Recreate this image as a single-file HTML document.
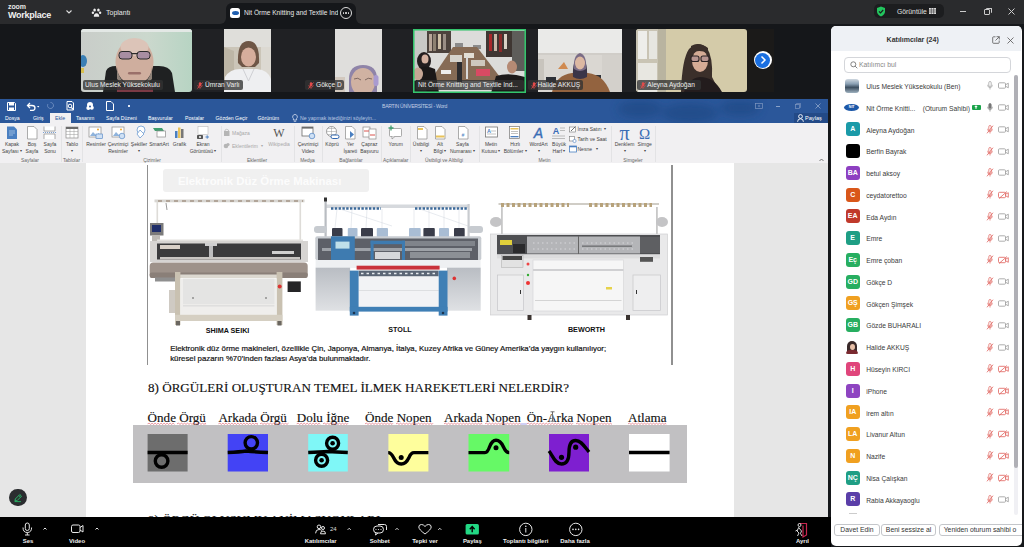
<!DOCTYPE html>
<html><head><meta charset="utf-8">
<style>
*{margin:0;padding:0;box-sizing:border-box}
html,body{width:1024px;height:547px;overflow:hidden;background:#16181b;font-family:"Liberation Sans",sans-serif}
.a{position:absolute}
#top{left:0;top:0;width:1024px;height:24px;background:#2a2b2d}
#strip{left:0;top:24px;width:831px;height:74px;background:#15171a}
.tile{position:absolute;top:29px;height:63px;overflow:hidden;border-radius:2px}
.lbl{position:absolute;height:9.5px;background:rgba(50,50,50,.78);color:#eee;font-size:6.6px;line-height:9.5px;padding:0 2px;border-radius:2px;white-space:nowrap;overflow:hidden}
#word{left:0;top:99px;width:828px;height:418px;background:#e6e6e6;overflow:hidden}
#wtitle{left:0;top:0;width:828px;height:24px;background:#2b579a}
#ribbon{left:0;top:24px;width:828px;height:40px;background:#f1f0f2}
.tab{position:absolute;top:15px;color:#fff;font-size:5.2px;line-height:8px;white-space:nowrap}
.rl{position:absolute;width:60px;text-align:center;font-size:5px;line-height:7px;color:#444;white-space:nowrap}
.rl i,.rs i{font-style:normal;font-size:3.5px;vertical-align:1px}
.rg{position:absolute;width:80px;text-align:center;font-size:4.9px;line-height:6px;color:#666;white-space:nowrap;margin-top:1.5px}
.rs{position:absolute;font-size:5px;line-height:7px;color:#444;white-space:nowrap}
.cap{position:absolute;width:60px;text-align:center;font-weight:bold;font-size:7.2px;line-height:8px;color:#111;white-space:nowrap}
.ser{font-family:"Liberation Serif",serif;font-size:13.1px;line-height:15px;color:#111;white-space:nowrap;-webkit-text-stroke:0.15px #111}
.sq{}
.av{position:absolute;left:14.5px;width:14px;height:14px;border-radius:3px;color:#fff;font-size:7px;font-weight:bold;line-height:14px;text-align:center}
.pn{position:absolute;left:35px;font-size:6.7px;line-height:10px;margin-top:1.2px;color:#3a3a3a;white-space:nowrap}
.pb{position:absolute;top:498.3px;height:12.4px;border:1px solid #c4c6ca;border-radius:3px;background:#fff;font-size:6.8px;line-height:10.4px;text-align:center;color:#333;white-space:nowrap;overflow:hidden}
.tl{position:absolute;top:21px;width:80px;text-align:center;color:#f0f0f0;font-size:5.95px;font-weight:bold;line-height:7px;white-space:nowrap}
#page{left:86px;top:64px;width:648px;height:360px;background:#fff}
#tb{left:0;top:517.3px;width:831px;height:29.7px;background:#000}
#panel{left:831.2px;top:25.8px;width:190.4px;height:520px;background:#fff;border-radius:5px;overflow:hidden}
</style></head><body>
<div id="top" class="a">
  <div class="a" style="left:8px;top:2.5px;color:#e8e8e8;font-size:7px;font-weight:bold;letter-spacing:-0.1px;line-height:8px">zoom</div>
  <div class="a" style="left:8px;top:9.5px;color:#f0f0f0;font-size:9px;font-weight:bold;letter-spacing:-0.25px;line-height:11px">Workplace</div>
  <svg class="a" style="left:65px;top:9px" width="8" height="6" viewBox="0 0 8 6"><path d="M1.5 1.5 L4 4 L6.5 1.5" stroke="#ddd" stroke-width="1.1" fill="none"/></svg>
  <svg class="a" style="left:91px;top:7px" width="11" height="11" viewBox="0 0 11 11"><ellipse cx="3.6" cy="3" rx="1.3" ry="1.5" fill="#eee"/><ellipse cx="7.4" cy="3" rx="1.3" ry="1.5" fill="#eee"/><ellipse cx="1.9" cy="5.8" rx="1.2" ry="1.3" fill="#eee"/><ellipse cx="9.1" cy="5.8" rx="1.2" ry="1.3" fill="#eee"/><path d="M2.8 9.8 Q2.8 6.3 5.5 6.3 Q8.2 6.3 8.2 9.8 Z" fill="#eee"/></svg>
  <div class="a" style="left:106px;top:8px;color:#e8e8e8;font-size:7px;line-height:9px">Toplantı</div>
  <div class="a" style="left:226px;top:3px;width:130px;height:21px;background:#15171a;border-radius:6px 6px 0 0"></div>
  <div class="a" style="left:220px;top:18px;width:6px;height:6px;background:#15171a"></div>
  <div class="a" style="left:214px;top:12px;width:12px;height:12px;background:#2a2b2d;border-radius:0 0 6px 0"></div>
  <div class="a" style="left:356px;top:18px;width:6px;height:6px;background:#15171a"></div>
  <div class="a" style="left:356px;top:12px;width:12px;height:12px;background:#2a2b2d;border-radius:0 0 0 6px"></div>
  <div class="a" style="left:230px;top:8px;width:10px;height:10px;background:#fff;border-radius:2.5px"><div class="a" style="left:1.5px;top:3px;width:7px;height:4px;background:#1f5fb0;border-radius:50%"></div></div>
  <div class="a" style="left:244px;top:8px;width:94px;overflow:hidden;white-space:nowrap;color:#e8e8e8;font-size:6.6px;line-height:9px">Nit Örme Knitting and Textile Industr</div>
  <div class="a" style="left:340px;top:6.5px;width:12px;height:12px;border:1px solid #ddd;border-radius:50%"></div>
  <div class="a" style="left:342.5px;top:12px;width:1.6px;height:1.6px;background:#ddd;border-radius:50%"></div>
  <div class="a" style="left:345.2px;top:12px;width:1.6px;height:1.6px;background:#ddd;border-radius:50%"></div>
  <div class="a" style="left:347.9px;top:12px;width:1.6px;height:1.6px;background:#ddd;border-radius:50%"></div>
  <div class="a" style="left:874px;top:4px;width:70px;height:14px;background:#1c1d1f;border-radius:5px"></div>
  <svg class="a" style="left:876px;top:5.5px" width="10" height="11" viewBox="0 0 10 11"><path d="M5 0.5 L9 2 L9 5.5 Q9 8.7 5 10.5 Q1 8.7 1 5.5 L1 2 Z" fill="#22c55e"/><path d="M3 5.3 L4.5 6.8 L7.2 4" stroke="#1c1d1f" stroke-width="1.2" fill="none"/></svg>
  <div class="a" style="left:897px;top:6.5px;color:#e0e0e0;font-size:6.8px;line-height:9px">Görüntüle</div>
  <svg class="a" style="left:929px;top:7.5px" width="7" height="6" viewBox="0 0 7 6"><rect x="0" y="0" width="7" height="6" fill="#ddd"/><path d="M0 2H7M0 4H7M2.3 0V6M4.7 0V6" stroke="#1c1d1f" stroke-width="0.5"/></svg>
  <div class="a" style="left:960px;top:10.5px;width:6px;height:1px;background:#ccc"></div>
  <div class="a" style="left:984px;top:9px;width:6px;height:6px;border:1px solid #ccc;border-radius:1px"></div>
  <div class="a" style="left:986px;top:7.5px;width:5.5px;height:5.5px;border-top:1px solid #ccc;border-right:1px solid #ccc;border-radius:1px"></div>
  <svg class="a" style="left:1008px;top:7.5px" width="7" height="7" viewBox="0 0 7 7"><path d="M0.5 0.5L6.5 6.5M6.5 0.5L0.5 6.5" stroke="#ccc" stroke-width="1"/></svg>
</div>
<div id="strip" class="a">
</div>
<div class="a" style="left:192px;top:29px;width:111px;height:63px;background:#202124"></div>
<div class="a" style="left:303px;top:29px;width:111px;height:63px;background:#202124"></div>
<div class="a" style="left:525px;top:29px;width:111px;height:63px;background:#202124"></div>
<div class="a" style="left:747px;top:29px;width:27px;height:63px;background:#1b1a19"></div>
<!-- tile 1 Ulus -->
<svg class="a" style="left:81px;top:29px;border-radius:3px" width="111" height="63" viewBox="0 0 111 63">
<defs><linearGradient id="g1" x1="0" x2="1"><stop offset="0" stop-color="#c9cdc9"/><stop offset="0.6" stop-color="#cbd8cd"/><stop offset="1" stop-color="#b7d4c3"/></linearGradient></defs>
<rect width="111" height="63" fill="url(#g1)"/>
<rect x="0" y="0" width="111" height="3" fill="#e3e8e5"/>
<ellipse cx="2" cy="32" rx="4" ry="6" fill="#3a7fb5"/>
<rect x="0" y="39" width="3" height="5" fill="#d8c050"/>
<path d="M22 63 L25 42 Q27 37 35 37 L78 37 Q88 37 91 44 L94 63 Z" fill="#1f2122"/>
<ellipse cx="53.5" cy="33" rx="19" ry="23" fill="#cfae9e"/>
<ellipse cx="53.5" cy="18" rx="14" ry="9" fill="#dcc4b8"/>
<path d="M36 38 Q38 56 53.5 57 Q69 56 71 38 L71 50 Q53 68 36 50 Z" fill="#8e8278"/>
<rect x="38" y="22.5" width="13" height="7.5" rx="3" fill="#a88ea2" stroke="#2b2b2b" stroke-width="1"/>
<rect x="56" y="22.5" width="13" height="7.5" rx="3" fill="#a88ea2" stroke="#2b2b2b" stroke-width="1"/>
<rect x="50" y="24" width="7" height="1.2" fill="#2b2b2b"/>
<rect x="47" y="43" width="13" height="2.5" rx="1.2" fill="#9a706a"/>
<rect x="36" y="58" width="36" height="5" fill="#7b3a45"/>
</svg>
<!-- tile 2 Umran -->
<svg class="a" style="left:224px;top:29px" width="47" height="63" viewBox="0 0 47 63">
<rect width="47" height="63" fill="#cbc5b8"/>
<rect width="47" height="18" fill="#dfdeda"/>
<path d="M0 18 L10 22 L10 63 L0 63 Z" fill="#bdb6a6"/>
<rect x="37" y="18" width="10" height="35" fill="#dcd9d2"/>
<path d="M14 34 Q13 12 24.5 12 Q36 12 35 34 L31 38 L18 38 Z" fill="#6e5646"/>
<ellipse cx="24.5" cy="28" rx="7.5" ry="9.5" fill="#d6ae9c"/>
<path d="M0 63 L1 48 Q6 40 16 40 L33 40 Q44 41 47 50 L47 63 Z" fill="#eeeff1"/>
<path d="M19 40 L24.5 52 L30 40" fill="none" stroke="#cfd0d4" stroke-width="1"/>
</svg>
<!-- tile 3 Gokce -->
<svg class="a" style="left:335px;top:29px" width="47" height="63" viewBox="0 0 47 63">
<rect width="47" height="63" fill="#dfdedc"/>
<rect x="0" y="48" width="10" height="15" fill="#d2c8be"/>
<path d="M14 63 L14 50 Q14 36 28 36 Q42 36 42 50 L42 63 Z" fill="#8f84a8"/>
<ellipse cx="28" cy="53" rx="12" ry="14" fill="#d0b2a2"/>
<path d="M19 50 Q23 48 26 51 M30 51 Q33 48 37 50" stroke="#6a5550" stroke-width="0.8" fill="none"/>
<rect x="38.5" y="46" width="5" height="11" rx="2.5" fill="#a99bd0"/>
</svg>
<!-- tile 4 Nit -->
<svg class="a" style="left:413px;top:28.5px" width="113" height="64" viewBox="0 0 113 64">
<rect width="113" height="64" fill="#dcdcda"/>
<rect x="0" y="0" width="14" height="64" fill="#c9c9c7"/>
<rect x="14" y="2" width="24" height="22" fill="#4c423d"/>
<rect x="16" y="5" width="3" height="17" fill="#b9a79a"/><rect x="20" y="5" width="3" height="17" fill="#8d8172"/><rect x="25" y="5" width="3" height="15" fill="#cfc0a8"/><rect x="30" y="5" width="3" height="16" fill="#9a8e86"/>
<rect x="73" y="2" width="26" height="26" fill="#3f3632"/>
<rect x="76" y="5" width="3" height="17" fill="#a8282a"/><rect x="81" y="5" width="3" height="17" fill="#c8b8a8"/><rect x="86" y="5" width="3" height="18" fill="#8a2a2a"/><rect x="91" y="5" width="3" height="15" fill="#d9d0c4"/>
<rect x="99" y="2" width="13" height="40" fill="#5e5d5a"/>
<rect x="42" y="14" width="8" height="4" fill="#8b8b8b"/><rect x="60" y="16" width="8" height="4" fill="#8b8b8b"/>
<path d="M17 52 L40 18 L64 18 L90 52 Z" fill="#866b55"/>
<rect x="37" y="26" width="12" height="7" fill="#d6d3cc"/><rect x="51" y="24" width="10" height="5" fill="#e2ded4"/><rect x="58" y="31" width="14" height="6" fill="#cdc8be"/>
<rect x="28" y="41" width="10" height="4" fill="#eeeeee"/>
<rect x="63" y="40" width="14" height="7" fill="#d84a63"/>
<rect x="44" y="33" width="5" height="20" fill="#2b2b2e"/>
<rect x="53" y="28" width="2" height="22" fill="#d8d8d8"/>
<ellipse cx="11" cy="32" rx="7" ry="9" fill="#231d1f"/>
<ellipse cx="12" cy="30" rx="3.5" ry="4.5" fill="#d4b0a0"/>
<path d="M2 64 L4 40 Q12 35 22 40 L26 64 Z" fill="#1b1718"/>
<ellipse cx="5" cy="45" rx="5" ry="6.5" fill="#c7a695"/>
<path d="M0 64 L0 52 Q6 50 12 54 L14 64 Z" fill="#222"/>
<ellipse cx="99" cy="38" rx="5" ry="6.5" fill="#b58a74"/>
<path d="M78 64 L83 47 Q96 43 112 48 L113 64 Z" fill="#1c1a1a"/>
<rect x="0.75" y="0.75" width="111.5" height="62.5" fill="none" stroke="#34c46c" stroke-width="1.6"/>
</svg>
<!-- tile 5 Halide -->
<svg class="a" style="left:538px;top:29px" width="84" height="63" viewBox="0 0 84 63">
<rect width="84" height="63" fill="#dad7d2"/>
<rect width="84" height="25" fill="#eaeae8"/>
<rect x="0" y="24" width="84" height="2" fill="#d0cdc8"/>
<rect x="64" y="26" width="20" height="37" fill="#d3d0cb"/>
<rect x="0" y="30" width="6" height="22" fill="#c8c4bd"/>
<path d="M20 40 L26 33 L30 40 Z" fill="#d08a50"/>
<rect x="56" y="46" width="7" height="10" fill="#2f3238"/>
<rect x="8" y="48" width="10" height="8" fill="#2d3036"/>
<path d="M14 63 Q18 46 34 44 L50 44 Q66 46 72 63 Z" fill="#93633f"/>
<path d="M35 48 Q34 30 42 27 Q50 30 49 48 Q42 52 35 48 Z" fill="#3a3548"/>
<path d="M36 40 Q35 26 42 24 Q49 26 48 40 Q42 44 36 40 Z" fill="#7a6c86"/>
<ellipse cx="42" cy="34" rx="5" ry="6.5" fill="#dcb8a2"/>
</svg>
<!-- tile 6 Aleyna -->
<svg class="a" style="left:636px;top:29px;border-radius:3px" width="111" height="63" viewBox="0 0 111 63">
<rect width="111" height="63" fill="#d4cba9"/>
<rect x="0" y="0" width="30" height="63" fill="#c9c4b4"/>
<rect x="2" y="2" width="9" height="28" fill="#eeeeea"/>
<rect x="13" y="2" width="8" height="28" fill="#e6e6e0"/>
<rect x="2" y="34" width="19" height="29" fill="#e8e7e1"/>
<rect x="22" y="0" width="8" height="63" fill="#b9b4a0"/>
<path d="M45 63 Q46 30 53 20 Q62 11 71 19 Q77 28 76 48 Q80 56 84 63 Z" fill="#3b2f2a"/>
<ellipse cx="64" cy="32" rx="8" ry="11" fill="#d5ab95"/>
<path d="M55 17 Q63 12 72 19 L72 24 Q63 20 55 24 Z" fill="#3b2f2a"/>
<rect x="55" y="27" width="8" height="5.5" rx="2" fill="#b89590" stroke="#2a2224" stroke-width="1.1"/>
<rect x="65" y="27" width="8" height="5.5" rx="2" fill="#b89590" stroke="#2a2224" stroke-width="1.1"/>
<path d="M48 63 Q53 49 64 48 Q78 48 86 63 Z" fill="#231c1d"/>
</svg>
<!-- labels -->
<div class="lbl" style="left:83px;top:80px;width:80px">Ulus Meslek Yüksekokulu</div>
<div class="lbl" style="left:194px;top:80px;width:49px;padding-left:11px"><svg style="position:absolute;left:3px;top:1.5px" width="6" height="7" viewBox="0 0 6 7"><rect x="1.8" y="0.3" width="2.4" height="4" rx="1.2" fill="#e24b4b"/><path d="M0.8 3Q0.8 5.3 3 5.3Q5.2 5.3 5.2 3M3 5.3V6.8" fill="none" stroke="#e24b4b" stroke-width="0.7"/><path d="M0.5 6.5L5.5 0.5" stroke="#e24b4b" stroke-width="0.9"/></svg>Ümran Varlı</div>
<div class="lbl" style="left:305px;top:80px;width:39px;padding-left:11px"><svg style="position:absolute;left:3px;top:1.5px" width="6" height="7" viewBox="0 0 6 7"><rect x="1.8" y="0.3" width="2.4" height="4" rx="1.2" fill="#e24b4b"/><path d="M0.8 3Q0.8 5.3 3 5.3Q5.2 5.3 5.2 3M3 5.3V6.8" fill="none" stroke="#e24b4b" stroke-width="0.7"/><path d="M0.5 6.5L5.5 0.5" stroke="#e24b4b" stroke-width="0.9"/></svg>Gökçe D</div>
<div class="lbl" style="left:416px;top:80px;width:108px">Nit Örme Knitting and Textile Ind...</div>
<div class="lbl" style="left:527.6px;top:80px;width:55px;padding-left:10px"><svg style="position:absolute;left:3px;top:1.5px" width="6" height="7" viewBox="0 0 6 7"><rect x="1.8" y="0.3" width="2.4" height="4" rx="1.2" fill="#e24b4b"/><path d="M0.8 3Q0.8 5.3 3 5.3Q5.2 5.3 5.2 3M3 5.3V6.8" fill="none" stroke="#e24b4b" stroke-width="0.7"/><path d="M0.5 6.5L5.5 0.5" stroke="#e24b4b" stroke-width="0.9"/></svg>Halide AKKUŞ</div>
<div class="lbl" style="left:637.3px;top:80px;width:64px;padding-left:10px"><svg style="position:absolute;left:3px;top:1.5px" width="6" height="7" viewBox="0 0 6 7"><rect x="1.8" y="0.3" width="2.4" height="4" rx="1.2" fill="#e24b4b"/><path d="M0.8 3Q0.8 5.3 3 5.3Q5.2 5.3 5.2 3M3 5.3V6.8" fill="none" stroke="#e24b4b" stroke-width="0.7"/><path d="M0.5 6.5L5.5 0.5" stroke="#e24b4b" stroke-width="0.9"/></svg>Aleyna Aydoğan</div>
<div class="a" style="left:753.5px;top:51.3px;width:18px;height:18px;border-radius:50%;background:#fff"></div>
<div class="a" style="left:755px;top:52.8px;width:15px;height:15px;border-radius:50%;background:#1a6fe0"></div>
<svg class="a" style="left:758px;top:55.3px" width="10" height="10" viewBox="0 0 10 10"><path d="M3.5 1.5 L7 5 L3.5 8.5" stroke="#fff" stroke-width="1.5" fill="none"/></svg>
<div id="word" class="a">
  <div id="wtitle" class="a">
  <svg class="a" style="left:0;top:0" width="828" height="24" viewBox="0 0 828 24"><defs><filter id="bl" x="-50%" y="-50%" width="200%" height="200%"><feGaussianBlur stdDeviation="4"/></filter></defs><g fill="#1d4682" opacity="0.6" filter="url(#bl)"><ellipse cx="640" cy="10" rx="22" ry="9"/><ellipse cx="690" cy="14" rx="28" ry="10"/><ellipse cx="740" cy="9" rx="20" ry="8"/></g></svg>
  <svg class="a" style="left:7px;top:2.5px" width="9" height="9" viewBox="0 0 9 9"><path d="M0.5 0.5H7.5L8.5 1.5V8.5H0.5Z" fill="none" stroke="#fff" stroke-width="1"/><rect x="2" y="1" width="5" height="2.5" fill="#fff"/><rect x="2" y="5.5" width="5" height="3" fill="#fff"/></svg>
  <svg class="a" style="left:26px;top:2.5px" width="14" height="9" viewBox="0 0 14 9"><path d="M2 3.5 H6 Q9 3.5 9 6 Q9 8.5 6 8.5 H4" fill="none" stroke="#fff" stroke-width="1.3"/><path d="M4 1 L1.5 3.5 L4 6" fill="none" stroke="#fff" stroke-width="1.3"/><path d="M11 4 L12.2 5.4 L13.4 4Z" fill="#fff"/></svg>
  <svg class="a" style="left:46px;top:2px" width="9" height="9" viewBox="0 0 9 9"><path d="M4.5 1.5 A3 3 0 1 1 1.8 3.2" fill="none" stroke="#6b8cc0" stroke-width="1"/></svg>
  <svg class="a" style="left:66px;top:2px" width="9" height="10" viewBox="0 0 9 10"><path d="M1 0.5H6L7.5 2V9H1Z" fill="none" stroke="#fff" stroke-width="1"/><circle cx="4" cy="5" r="1.8" fill="none" stroke="#fff" stroke-width="1"/><path d="M5.3 6.3L7.3 8.5" stroke="#fff" stroke-width="1.2"/></svg>
  <svg class="a" style="left:85px;top:2px" width="10" height="10" viewBox="0 0 10 10"><circle cx="5" cy="4" r="3" fill="#fff"/><circle cx="3.3" cy="7" r="2" fill="#fff"/><circle cx="6.8" cy="6.8" r="2" fill="#fff"/><circle cx="5" cy="5.5" r="1" fill="#2b579a"/></svg>
  <svg class="a" style="left:106px;top:2px" width="8" height="10" viewBox="0 0 8 10"><path d="M0.5 0.5H5L7.5 3V9.5H0.5Z" fill="none" stroke="#fff" stroke-width="1"/></svg>
  <div class="a" style="left:128px;top:6px;width:2px;height:2px;background:#dfe6f2"></div>
  <div class="a" style="left:382px;top:3px;color:#c3cfe4;font-size:5.1px;line-height:8px;letter-spacing:-0.27px">BARTIN ÜNİVERSİTESİ - Word</div>
  <svg class="a" style="left:754.5px;top:3.5px" width="8" height="6" viewBox="0 0 8 6"><rect x="0.5" y="0.5" width="7" height="5" fill="none" stroke="#7f97c0" stroke-width="0.7"/><path d="M2.8 3H5.2M4 1.8V4.2" stroke="#7f97c0" stroke-width="0.6"/></svg>
  <div class="a" style="left:775.5px;top:7px;width:4.5px;height:0.8px;background:#8aa2c8"></div>
  <svg class="a" style="left:795px;top:3.5px" width="6" height="6" viewBox="0 0 6 6"><rect x="0.4" y="1.6" width="4" height="4" fill="none" stroke="#7f97c0" stroke-width="0.7"/><path d="M1.6 1.6V0.4H5.6V4.4H4.4" fill="none" stroke="#7f97c0" stroke-width="0.7"/></svg>
  <svg class="a" style="left:815px;top:3.5px" width="6" height="6" viewBox="0 0 6 6"><path d="M0.5 0.5L5.5 5.5M5.5 0.5L0.5 5.5" stroke="#8fa6cc" stroke-width="0.8"/></svg>
  <div class="a" style="left:794px;top:14px;width:34px;height:10px;background:#234a87"></div>
  <svg class="a" style="left:797px;top:15px" width="7" height="8" viewBox="0 0 7 8"><circle cx="3.5" cy="2.5" r="1.9" fill="none" stroke="#fff" stroke-width="0.9"/><path d="M0.6 7.8 Q0.6 4.8 3.5 4.8 Q6.4 4.8 6.4 7.8" fill="none" stroke="#fff" stroke-width="0.9"/></svg>
  <div class="a" style="left:805px;top:15px;color:#fff;font-size:5.6px;line-height:8px">Paylaş</div>
  <div class="a" style="left:50px;top:14px;width:21px;height:10px;background:#f1f0f2"></div>
  <div class="tab" style="left:5px">Dosya</div>
  <div class="tab" style="left:33px">Giriş</div>
  <div class="tab" style="left:55px;color:#2b579a">Ekle</div>
  <div class="tab" style="left:76px">Tasarım</div>
  <div class="tab" style="left:106px">Sayfa Düzeni</div>
  <div class="tab" style="left:148px">Başvurular</div>
  <div class="tab" style="left:185px">Postalar</div>
  <div class="tab" style="left:215.5px">Gözden Geçir</div>
  <div class="tab" style="left:257.5px">Görünüm</div>
  <svg class="a" style="left:292px;top:15px" width="6" height="8" viewBox="0 0 6 8"><path d="M3 0.5 A2.3 2.3 0 0 1 4.6 4.5 V6 H1.4 V4.5 A2.3 2.3 0 0 1 3 0.5Z" fill="none" stroke="#d5def0" stroke-width="0.8"/><path d="M1.8 7.3H4.2" stroke="#d5def0" stroke-width="0.8"/></svg>
  <div class="tab" style="left:300px;color:#b9c8e2">Ne yapmak istediğinizi söyleyin...</div>
</div>
  <div id="ribbon" class="a">
<svg class="a" style="left:0;top:0" width="828" height="40" viewBox="0 123 828 40">
<!-- Kapak -->
<path d="M7 126.5H14L17 129.5V139H7Z" fill="#4a7fc1"/><path d="M9 131H15M9 133H15M9 135H13" stroke="#cfe0f4" stroke-width="0.6"/>
<!-- Bos -->
<path d="M27.5 126.5H34L37 129.5V139H27.5Z" fill="#fff" stroke="#8a8a8a" stroke-width="0.7"/>
<!-- Sayfa sonu -->
<path d="M44 126.5V131H55V126.5M44 139V134H55V139" fill="#fff" stroke="#8a8a8a" stroke-width="0.7"/><path d="M43 132.5H56" stroke="#4a7fc1" stroke-width="0.7" stroke-dasharray="1 1"/>
<!-- Tablo -->
<rect x="66" y="127" width="12" height="11" fill="#fff" stroke="#8a8a8a" stroke-width="0.7"/><rect x="66" y="127" width="12" height="2" fill="#6b6b6b"/><path d="M66 131.5H78M66 134.5H78M70 129V138M74 129V138" stroke="#9a9a9a" stroke-width="0.5"/>
<!-- Resimler -->
<rect x="89" y="127" width="12" height="10" fill="#fff" stroke="#8a8a8a" stroke-width="0.7"/><circle cx="98" cy="129.5" r="1" fill="#f0a830"/><path d="M90 136L93 132L96 135L99 133L100 136Z" fill="#8fb3dc"/><rect x="96" y="134" width="6.5" height="4.5" fill="#cfe0f4" stroke="#4a7fc1" stroke-width="0.6"/>
<!-- Cevrimici resimler -->
<rect x="112" y="127" width="12" height="10" fill="#fff" stroke="#8a8a8a" stroke-width="0.7"/><circle cx="121" cy="129.5" r="1" fill="#f0a830"/><path d="M113 136L116 132L119 135L122 133L123 136Z" fill="#8fb3dc"/><circle cx="122" cy="136" r="2.8" fill="#cfe0f4" stroke="#4a7fc1" stroke-width="0.6"/>
<!-- Sekiller -->
<circle cx="141" cy="130" r="4" fill="#fff" stroke="#6c9bd2" stroke-width="0.8"/><path d="M137 134L140 130L144 134L140 138Z" fill="#fff" stroke="#6c9bd2" stroke-width="0.8"/>
<!-- SmartArt -->
<path d="M153 128H162L164 131H155Z" fill="#3f9c6d"/><rect x="157" y="131" width="8.5" height="6" fill="#fff" stroke="#8a8a8a" stroke-width="0.7"/>
<!-- Grafik -->
<rect x="175" y="131" width="2.5" height="7" fill="#4a7fc1"/><rect x="178" y="127.5" width="2.5" height="10.5" fill="#e8c25a"/><rect x="181" y="129" width="2.5" height="9" fill="#777"/>
<!-- Ekran goruntusu -->
<rect x="198" y="126.5" width="10" height="8" fill="#fff" stroke="#bbb" stroke-width="0.6"/><rect x="197" y="135" width="6" height="4" rx="0.8" fill="#555"/><circle cx="200" cy="137" r="1.1" fill="#f1f0f2"/><path d="M205.5 137H209M207.2 135.3V138.7" stroke="#4a7fc1" stroke-width="0.9"/>
<!-- Magaza / Eklentilerim -->
<rect x="224" y="131" width="5.5" height="5" fill="#b5b5b5"/><path d="M225 131V130Q226.7 128.5 228.5 130V131" fill="none" stroke="#b5b5b5" stroke-width="0.7"/>
<circle cx="226" cy="146" r="2.3" fill="#b5b5b5"/><circle cx="228" cy="144.5" r="1.6" fill="#b5b5b5"/>
<text x="279" y="137" font-family="Liberation Serif" font-size="12" fill="#555" text-anchor="middle">W</text>
<!-- Video -->
<rect x="302" y="127" width="11" height="9" fill="#fff" stroke="#6b6b6b" stroke-width="0.8"/><rect x="302" y="127" width="11" height="1.6" fill="#6b6b6b"/><circle cx="312" cy="136" r="2.8" fill="#cfe0f4" stroke="#4a7fc1" stroke-width="0.7"/>
<!-- Kopru -->
<circle cx="331.5" cy="131.5" r="5" fill="#fff" stroke="#777" stroke-width="0.7"/><path d="M326.5 131.5H336.5M331.5 126.5V136.5M328 128.5H335M328 134.5H335" stroke="#999" stroke-width="0.5"/><rect x="331" y="135" width="8" height="3.5" rx="1.7" fill="#fff" stroke="#2f66b0" stroke-width="1"/>
<!-- Yer isareti -->
<path d="M345.5 126.5H352L355 129.5V139H345.5Z" fill="#fff" stroke="#8a8a8a" stroke-width="0.7"/><path d="M350 131V138L354 134.5Z" fill="#4a7fc1"/>
<!-- Capraz -->
<rect x="363" y="127" width="7" height="10" fill="#fff" stroke="#8a8a8a" stroke-width="0.7"/><rect x="369" y="129" width="7" height="10" fill="#fff" stroke="#8a8a8a" stroke-width="0.7"/><path d="M364 131H369M370 135H375" stroke="#d9534f" stroke-width="1"/>
<!-- Yorum -->
<rect x="389.5" y="128.5" width="12" height="8" rx="1" fill="#fff" stroke="#8a8a8a" stroke-width="0.7"/><path d="M392 136.5L392 139L395 136.5" fill="#fff" stroke="#8a8a8a" stroke-width="0.7"/><path d="M391 125.5V130.5M388.5 128H393.5" stroke="#3f9c6d" stroke-width="1.3"/>
<!-- Ustbilgi -->
<path d="M417.5 126.5H424L427 129.5V139H417.5Z" fill="#fff" stroke="#8a8a8a" stroke-width="0.7"/><rect x="418" y="128" width="5" height="2" fill="#e8c25a"/>
<path d="M435.5 126.5H442L445 129.5V139H435.5Z" fill="#fff" stroke="#8a8a8a" stroke-width="0.7"/><rect x="436" y="135.5" width="8.5" height="2" fill="#e8c25a"/>
<path d="M458.5 126.5H465L468 129.5V139H458.5Z" fill="#fff" stroke="#8a8a8a" stroke-width="0.7"/><text x="463" y="136.5" font-size="5" fill="#4a7fc1" text-anchor="middle" font-style="italic">#</text>
<!-- Metin kutusu -->
<rect x="485.5" y="127" width="12" height="10" fill="#fff" stroke="#777" stroke-width="0.8"/><text x="489" y="133" font-size="5.5" fill="#4a7fc1" font-weight="bold" text-anchor="middle">A</text><path d="M491 131H496M487 134H496" stroke="#aaa" stroke-width="0.7"/>
<!-- Hizli bolumler -->
<rect x="509.5" y="126.5" width="10" height="12" fill="#fff" stroke="#777" stroke-width="0.7"/><rect x="510.5" y="128" width="8" height="1.5" fill="#e8c25a"/><path d="M511 131.5H518M511 133.5H518" stroke="#999" stroke-width="0.6"/><rect x="510.5" y="136" width="8" height="1.3" fill="#4a7fc1"/>
<text x="538.5" y="138" font-size="14" fill="#3a6db5" font-style="italic" text-anchor="middle" font-family="Liberation Sans" stroke="#3a6db5" stroke-width="0.4">A</text>
<text x="556" y="134" font-size="9" fill="#3a6db5" font-weight="bold" text-anchor="middle">A</text><path d="M560 128H565M560 130.5H565M552 136H565M552 138.5H565" stroke="#bbb" stroke-width="1"/>
<!-- small right -->
<rect x="569.5" y="127" width="6" height="5" fill="#fff" stroke="#777" stroke-width="0.6"/><path d="M571 131L575.5 126.5" stroke="#333" stroke-width="0.7"/>
<rect x="569.5" y="136.5" width="5" height="4.5" fill="#fff" stroke="#777" stroke-width="0.6"/><circle cx="574.5" cy="141" r="1.6" fill="#fff" stroke="#4a7fc1" stroke-width="0.6"/>
<rect x="569.5" y="146" width="7" height="6" fill="#fff" stroke="#4a7fc1" stroke-width="0.8"/><rect x="569.5" y="146" width="7" height="1.3" fill="#4a7fc1"/>
<text x="624.5" y="139.5" font-size="20" fill="#3a6db5" text-anchor="middle" font-family="Liberation Serif">π</text>
<text x="644.7" y="139" font-size="15" fill="#3a6db5" text-anchor="middle" font-family="Liberation Serif">Ω</text>
</svg><div class="rl" style="left:-18px;top:18px;color:#444">Kapak</div><div class="rl" style="left:-18px;top:25px;color:#444">Sayfası <i>▾</i></div><div class="rl" style="left:2px;top:18px;color:#444">Boş</div><div class="rl" style="left:2px;top:25px;color:#444">Sayfa</div><div class="rl" style="left:20px;top:18px;color:#444">Sayfa</div><div class="rl" style="left:20px;top:25px;color:#444">Sonu</div><div class="rl" style="left:42px;top:18px;color:#444">Tablo</div><div class="rl" style="left:42px;top:25px;color:#444"><i>▾</i></div><div class="rl" style="left:66px;top:18px;color:#444">Resimler</div><div class="rl" style="left:88px;top:18px;color:#444">Çevrimiçi</div><div class="rl" style="left:88px;top:25px;color:#444">Resimler</div><div class="rl" style="left:109px;top:18px;color:#444">Şekiller</div><div class="rl" style="left:109px;top:25px;color:#444"><i>▾</i></div><div class="rl" style="left:129px;top:18px;color:#444">SmartArt</div><div class="rl" style="left:149.5px;top:18px;color:#444">Grafik</div><div class="rl" style="left:173px;top:18px;color:#444">Ekran</div><div class="rl" style="left:173px;top:25px;color:#444">Görüntüsü <i>▾</i></div><div class="rl" style="left:249px;top:18px;color:#a8a8a8">Wikipedia</div><div class="rl" style="left:278px;top:18px;color:#444">Çevrimiçi</div><div class="rl" style="left:278px;top:25px;color:#444">Video</div><div class="rl" style="left:302px;top:18px;color:#444">Köprü</div><div class="rl" style="left:320.3px;top:18px;color:#444">Yer</div><div class="rl" style="left:320.3px;top:25px;color:#444">İşareti</div><div class="rl" style="left:339.4px;top:18px;color:#444">Çapraz</div><div class="rl" style="left:339.4px;top:25px;color:#444">Başvuru</div><div class="rl" style="left:365.7px;top:18px;color:#444">Yorum</div><div class="rl" style="left:391px;top:18px;color:#444">Üstbilgi</div><div class="rl" style="left:391px;top:25px;color:#444"><i>▾</i></div><div class="rl" style="left:410px;top:18px;color:#444">Alt</div><div class="rl" style="left:410px;top:25px;color:#444">Bilgi <i>▾</i></div><div class="rl" style="left:432.5px;top:18px;color:#444">Sayfa</div><div class="rl" style="left:432.5px;top:25px;color:#444">Numarası <i>▾</i></div><div class="rl" style="left:461px;top:18px;color:#444">Metin</div><div class="rl" style="left:461px;top:25px;color:#444">Kutusu <i>▾</i></div><div class="rl" style="left:485.20000000000005px;top:18px;color:#444">Hızlı</div><div class="rl" style="left:485.20000000000005px;top:25px;color:#444">Bölümler <i>▾</i></div><div class="rl" style="left:508.6px;top:18px;color:#444">WordArt</div><div class="rl" style="left:508.6px;top:25px;color:#444"><i>▾</i></div><div class="rl" style="left:529px;top:18px;color:#444">Büyük</div><div class="rl" style="left:529px;top:25px;color:#444">Harf <i>▾</i></div><div class="rl" style="left:594.5px;top:18px;color:#444">Denklem</div><div class="rl" style="left:594.5px;top:25px;color:#444"><i>▾</i></div><div class="rl" style="left:614.7px;top:18px;color:#444">Simge</div><div class="rl" style="left:614.7px;top:25px;color:#444"><i>▾</i></div><div class="rg" style="left:-10px;top:33px">Sayfalar</div><div class="rg" style="left:31.5px;top:33px">Tablolar</div><div class="rg" style="left:112px;top:33px">Çizimler</div><div class="rg" style="left:217px;top:33px">Eklentiler</div><div class="rg" style="left:267.5px;top:33px">Medya</div><div class="rg" style="left:311px;top:33px">Bağlantılar</div><div class="rg" style="left:355.7px;top:33px">Açıklamalar</div><div class="rg" style="left:404px;top:33px">Üstbilgi ve Altbilgi</div><div class="rg" style="left:504.5px;top:33px">Metin</div><div class="rg" style="left:593px;top:33px">Simgeler</div><div class="a" style="left:61px;top:3px;width:1px;height:36px;background:#e3e3e5"></div><div class="a" style="left:82px;top:3px;width:1px;height:36px;background:#e3e3e5"></div><div class="a" style="left:220.5px;top:3px;width:1px;height:36px;background:#e3e3e5"></div><div class="a" style="left:294px;top:3px;width:1px;height:36px;background:#e3e3e5"></div><div class="a" style="left:321.7px;top:3px;width:1px;height:36px;background:#e3e3e5"></div><div class="a" style="left:381px;top:3px;width:1px;height:36px;background:#e3e3e5"></div><div class="a" style="left:409.6px;top:3px;width:1px;height:36px;background:#e3e3e5"></div><div class="a" style="left:478.6px;top:3px;width:1px;height:36px;background:#e3e3e5"></div><div class="a" style="left:611.3px;top:3px;width:1px;height:36px;background:#e3e3e5"></div><div class="a" style="left:655px;top:3px;width:1px;height:36px;background:#e3e3e5"></div><div class="rs" style="left:232px;top:7px;color:#a8a8a8">Mağaza</div><div class="rs" style="left:232px;top:20px;color:#a8a8a8">Eklentilerim &nbsp;<i>▾</i></div><div class="rs" style="left:577.5px;top:3px">İmza Satırı &nbsp;<i>▾</i></div><div class="rs" style="left:577.5px;top:12.5px">Tarih ve Saat</div><div class="rs" style="left:577.5px;top:22.5px">Nesne &nbsp; <i>▾</i></div><svg class="a" style="left:818.5px;top:34.5px" width="5" height="4" viewBox="0 0 5 4"><path d="M0.5 3L2.5 1L4.5 3" fill="none" stroke="#555" stroke-width="0.8"/></svg></div>
  <div id="page" class="a"></div>
</div>
<div class="a" id="doc" style="left:0;top:163px;width:828px;height:354px;overflow:hidden">
<div class="a" style="left:0;top:-163px;width:828px;height:517px">
<div class="a" style="left:147.2px;top:165px;width:1.3px;height:200px;background:#909090"></div>
<div class="a" style="left:671.3px;top:165px;width:1.3px;height:200px;background:#909090"></div>
<div class="a" style="left:163px;top:169px;width:206px;height:23px;background:#f0f0f0;border-radius:3px"></div>
<div class="a" style="left:178px;top:175px;color:#fcfcfc;font-weight:bold;font-size:11.4px;line-height:13px;white-space:nowrap">Elektronik Düz Örme Makinası</div>
<svg class="a" style="left:0;top:0" width="828" height="517" viewBox="0 0 828 517">
<!-- SHIMA SEIKI -->
<g>
<rect x="154.5" y="199.5" width="150" height="2.8" fill="#d8d6d2"/>
<path d="M158 201H303" stroke="#8a7560" stroke-width="1.2" stroke-dasharray="4 4"/>
<rect x="156.5" y="202" width="1.6" height="38" fill="#dedcd8"/>
<rect x="299.5" y="202" width="1.6" height="38" fill="#dedcd8"/>
<path d="M166 203L167 210" stroke="#555" stroke-width="0.6"/>
<rect x="150" y="223" width="13.5" height="12.5" fill="#7b7a7a"/>
<rect x="152" y="225" width="9" height="7" fill="#1f2e6a"/>
<rect x="152" y="235" width="8" height="6" fill="#bdbab5"/>
<rect x="157" y="239.5" width="146" height="4" fill="#e3e1de"/>
<rect x="150" y="241" width="158" height="21" fill="#d6d4d2"/><rect x="157" y="243.5" width="144" height="16" fill="#3b3b3d"/>
<rect x="160" y="245" width="20" height="4" fill="#d8d0c8"/>
<rect x="205" y="243" width="12" height="3" fill="#cfcfd0"/><rect x="209" y="246" width="4" height="12" fill="#bdbdbf"/>
<rect x="160" y="257" width="140" height="2.5" fill="#c9c6c3"/>
<rect x="272" y="251" width="22" height="3" fill="#d0d0d0"/>
<rect x="149.7" y="262.5" width="158" height="15.5" rx="3.5" fill="#9e928a"/>
<rect x="149.7" y="272.5" width="158" height="5.5" rx="2" fill="#8a7f78"/>
<rect x="155" y="277.5" width="20" height="4" fill="#8f8f8f"/>
<rect x="175" y="274.5" width="107" height="3.5" fill="#dcd8d0"/>
<rect x="175" y="272" width="5.4" height="53" fill="#c9c1b1"/>
<rect x="276.6" y="272" width="5.8" height="53" fill="#c9c1b1"/>
<rect x="180.4" y="278.5" width="96.2" height="36.5" fill="#efeeec"/>
<rect x="183" y="278.7" width="91.4" height="25.5" fill="#e4e4e3"/>
<rect x="183" y="305.5" width="91.4" height="0.8" fill="#cfcfcf"/>
<circle cx="193" cy="298" r="0.7" fill="#333"/><circle cx="266" cy="298" r="0.7" fill="#333"/>
<rect x="175" y="314.8" width="107.4" height="6.2" fill="#d5cfc2"/>
<rect x="176" y="321" width="4" height="4.5" fill="#6a6660"/><rect x="277.5" y="321" width="4" height="4.5" fill="#6a6660"/>
<rect x="287.6" y="281.4" width="13.2" height="10.6" fill="#252527"/>
<circle cx="279.7" cy="286.6" r="2" fill="#d33"/>
<rect x="169" y="290" width="6" height="23" fill="#cfcac3"/>
</g>
<!-- STOLL -->
<g>
<rect x="325.5" y="204.5" width="143.5" height="3.5" fill="#d6d9dd"/>
<path d="M331 208.5H381M415 208.5H468" stroke="#3d6a9a" stroke-width="2.6" stroke-dasharray="2.4 1.4"/>
<rect x="324.5" y="199" width="2.2" height="38" fill="#b9bdc2"/><rect x="324" y="197.5" width="3" height="4" fill="#333"/>
<rect x="467.5" y="204" width="2.2" height="33" fill="#c9ccd0"/>
<path d="M337 209L335 228M352 209L351 228M367 209L366 228M382 209L382 228M414 209L414 228M429 209L429 228M444 209L444 228M459 209L459 228M340 209L392 226M420 209L468 226" stroke="#c5ccd6" stroke-width="0.4"/>
<g fill="#3a3d4a"><rect x="332" y="228" width="10.5" height="9.5" rx="1"/><rect x="361" y="228" width="12" height="9.5" rx="1"/><rect x="423.4" y="228" width="11.4" height="9.5" rx="1"/><rect x="454" y="228" width="10.7" height="9.5" rx="1"/></g>
<g fill="#a9bdd4"><rect x="347.8" y="228" width="9.7" height="9.5" rx="1"/><rect x="376.8" y="228" width="11.2" height="9.5" rx="1"/><rect x="409" y="228" width="11.7" height="9.5" rx="1"/><rect x="439" y="228" width="10" height="9.5" rx="1"/></g>
<rect x="314" y="226" width="13" height="7" rx="3" fill="#c7cbd0"/><rect x="468" y="226" width="15" height="7" rx="3" fill="#c7cbd0"/>
<rect x="315.3" y="236.3" width="166" height="24" rx="2" fill="#c8ccd1"/>
<rect x="318" y="238.5" width="160" height="21.5" fill="#5d6068"/>
<rect x="322" y="248" width="150" height="3" fill="#9ea2a8"/>
<rect x="405" y="241" width="70" height="5" fill="#80848b"/>
<rect x="410" y="252" width="60" height="6" fill="#8c9096"/>
<rect x="331" y="236.3" width="23.8" height="23.7" fill="#3e7bb0"/>
<rect x="335.5" y="241.6" width="14" height="7" fill="#bfe0ea"/>
<rect x="370.6" y="240.7" width="34.4" height="3.5" fill="#3e7bb0"/><rect x="370.6" y="240.7" width="3" height="19.5" fill="#3e7bb0"/><rect x="402" y="240.7" width="3" height="19.5" fill="#3e7bb0"/>
<rect x="375" y="252" width="25" height="7" fill="#d5d7da"/>
<defs><linearGradient id="sg" x1="0" x2="0" y1="0" y2="1"><stop offset="0" stop-color="#b9bdc3"/><stop offset="1" stop-color="#dfe1e4"/></linearGradient></defs>
<rect x="315.6" y="260" width="165" height="8" fill="#eef0f2"/>
<rect x="315.6" y="267.7" width="34.5" height="43" fill="url(#sg)"/>
<rect x="447" y="267.7" width="33.7" height="43" fill="url(#sg)"/>
<rect x="356.6" y="265.7" width="83" height="3.9" fill="#c9323a"/>
<rect x="358.6" y="270.6" width="80" height="5.9" fill="#5b6675"/>
<path d="M361 273.5H437" stroke="#e8ecf0" stroke-width="1.6" stroke-dasharray="2.5 3"/>
<rect x="358.6" y="276.5" width="80" height="30.3" fill="#f2f3f5"/>
<rect x="358.6" y="290" width="80" height="0.8" fill="#d8dadd"/>
<rect x="349.8" y="270.6" width="8.8" height="45" fill="#3f7fb5"/>
<rect x="438.7" y="270.6" width="8.8" height="45" fill="#3f7fb5"/>
<rect x="349.8" y="306.8" width="97.7" height="4.8" fill="#3f7fb5"/>
<circle cx="354" cy="313" r="1.3" fill="#1d3550"/><circle cx="443" cy="313" r="1.3" fill="#1d3550"/>
<circle cx="454.3" cy="278.4" r="1.8" fill="#d33"/>
</g>
<!-- BEWORTH -->
<g>
<rect x="498.5" y="203" width="160.5" height="2" fill="#d0cdc6"/>
<path d="M501 205H569M589 205H652" stroke="#b7a27a" stroke-width="4" stroke-dasharray="3 2.5"/>
<rect x="501" y="207" width="1.8" height="27" fill="#c8c8c8"/><rect x="656" y="207" width="1.8" height="27" fill="#c8c8c8"/>
<ellipse cx="496" cy="222" rx="6" ry="5" fill="#c4c4c6"/><ellipse cx="662" cy="222" rx="6" ry="5" fill="#c4c4c6"/>
<rect x="490.5" y="234" width="177" height="81" fill="#e9e9ea" stroke="#cfcfd1" stroke-width="0.7"/>
<rect x="497" y="235" width="163" height="19.5" fill="#4e4f52"/>
<rect x="527" y="236.5" width="113" height="17" fill="#b4b5b8"/>
<rect x="578" y="236" width="1" height="18" fill="#666"/>
<path d="M533 243H575M582 243H636M533 249H575M582 249H636" stroke="#d6d7da" stroke-width="1.2" stroke-dasharray="1.5 3"/>
<rect x="582" y="245.5" width="50" height="1.3" fill="#6a6b6e"/>
<rect x="500" y="240" width="12" height="5" fill="#e0cf3a"/>
<rect x="513" y="244" width="12" height="9" fill="#2a2a2c"/>
<rect x="640" y="237" width="20" height="16" fill="#5e5f62"/>
<rect x="497" y="254.4" width="163" height="4" fill="#dcdcdd"/>
<rect x="501.7" y="255.3" width="21.3" height="12" fill="#e2e2e2" stroke="#aaa" stroke-width="0.5"/><rect x="502.5" y="256" width="19.5" height="4" fill="#444"/>
<rect x="533" y="260" width="90.5" height="51" fill="#f6f6f6" stroke="#d4d4d6" stroke-width="0.6"/>
<rect x="533" y="269" width="90.5" height="2" fill="#d0d0d2"/>
<rect x="535" y="300" width="86.5" height="0.8" fill="#ccc"/>
<rect x="606" y="287" width="6" height="2.5" fill="#e6d24a"/>
<rect x="497.5" y="275" width="26" height="35.5" fill="#eeeeef" stroke="#c7c7c9" stroke-width="0.7"/>
<rect x="633" y="275" width="27.5" height="35.5" fill="#eeeeef" stroke="#c7c7c9" stroke-width="0.7"/>
<rect x="520" y="290" width="1" height="4" fill="#333"/><rect x="636" y="290" width="1" height="4" fill="#333"/>
<circle cx="528" cy="264" r="1.5" fill="#e44"/>
<circle cx="528" cy="275" r="1.2" fill="#3a3"/><circle cx="528" cy="283" r="2" fill="#e33"/>
<rect x="640" y="257" width="13" height="4.8" fill="#555"/>
<rect x="527.5" y="315" width="4" height="5" fill="#3a3330"/><rect x="626" y="315" width="4" height="5" fill="#3a3330"/>
</g>
</svg>
<div class="cap" style="left:197.5px;top:327px">SHIMA SEIKI</div>
<div class="cap" style="left:370px;top:325.5px">STOLL</div>
<div class="cap" style="left:556.5px;top:325.5px">BEWORTH</div>
<div class="a" style="left:170.2px;top:344px;color:#151515;font-size:7.84px;line-height:9.5px;white-space:nowrap;-webkit-text-stroke:0.2px #151515">Elektronik düz örme makineleri, özellikle Çin, Japonya, Almanya, İtalya, Kuzey Afrika ve Güney Amerika’da yaygın kullanılıyor;<br>küresel pazarın %70’inden fazlası Asya’da bulunmaktadır.</div>
<div class="a ser" style="left:148px;top:380px">8) ÖRGÜLERİ OLUŞTURAN TEMEL İLMEK HAREKETLERİ NELERDİR?</div>
<div class="a ser sq" style="left:147.6px;top:409.5px">Önde Örgü</div>
<div class="a ser sq" style="left:218.4px;top:409.5px">Arkada Örgü</div>
<div class="a ser sq" style="left:296.7px;top:409.5px">Dolu İğne</div>
<div class="a ser sq" style="left:365px;top:409.5px">Önde Nopen</div>
<div class="a ser sq" style="left:444px;top:409.5px">Arkada Nopen</div>
<div class="a ser sq" style="left:526.8px;top:409.5px">Ön-Arka Nopen</div>
<div class="a ser sq" style="left:628px;top:409.5px">Atlama</div>
<div class="a" style="left:133px;top:425px;width:554px;height:57.5px;background:#c1c0c2"></div>
<svg class="a" style="left:0;top:0" width="828" height="517" viewBox="0 0 828 517">
<g stroke="#000" stroke-width="3.4" fill="none">
<rect x="147.6" y="434" width="40" height="37.5" fill="#6d6d6d" stroke="none"/>
<path d="M147.6 452.5 H187.6"/><circle cx="161.6" cy="461" r="6.3"/>
<rect x="227.7" y="434" width="40.3" height="37.5" fill="#4343f5" stroke="none"/>
<path d="M227.7 452.5 Q240 452 246 451 Q256 452 268 452.5"/><circle cx="251.3" cy="442.8" r="6.2"/>
<rect x="308.2" y="434" width="39.6" height="37.5" fill="#7ff7f7" stroke="none"/>
<path d="M308.2 452.5 Q320 452 328 451.5 Q336 452 347.8 452.5"/><circle cx="332.6" cy="443.2" r="6"/><circle cx="321.6" cy="460.3" r="6"/>
<rect x="388.4" y="434" width="40" height="37.5" fill="#fefe9c" stroke="none"/>
<path d="M388.2 452.6 Q391 452.6 393.5 457.5 Q396.5 464 401.2 464 Q406 464 409 457.5 Q411 452.6 414 452.6 H428.4"/>
<rect x="468.5" y="434" width="40.7" height="37.5" fill="#66f966" stroke="none"/>
<path d="M468.5 452.6 H485 Q487.5 452.6 489.5 447 Q492 440.3 496 440.3 Q500.5 440.3 503.5 447 Q506 452.6 509.2 452.6"/>
<rect x="549" y="434" width="40" height="37.5" fill="#7e1fd0" stroke="none"/>
<path d="M549 451 C553 456 555 464 561.5 464 C568 464 569 458 569 452 C569 446 570 440.5 575.7 440.5 C581 440.5 584 446 589 452"/>
<rect x="629" y="434" width="40.6" height="37.5" fill="#ffffff" stroke="none"/>
<path d="M629 452.5 H669.6"/>
</g>
<circle cx="332.6" cy="443.2" r="2.3" fill="#000"/><circle cx="321.6" cy="460.3" r="2.3" fill="#000"/>
<circle cx="401.2" cy="457.4" r="2.5" fill="#000"/>
<circle cx="496" cy="447.8" r="2.5" fill="#000"/>
<circle cx="561.5" cy="457.3" r="2.6" fill="#000"/><circle cx="575.7" cy="447.2" r="2.6" fill="#000"/>
<g stroke="#de5a6a" stroke-width="0.8" fill="none" opacity="0.8"><path d="M147.6 423.8 L149.1 423.2 L150.6 424.4 L152.1 423.2 L153.6 424.4 L155.1 423.2 L156.6 424.4 L158.1 423.2 L159.6 424.4 L161.1 423.2 L162.6 424.4 L164.1 423.2 L165.6 424.4 L167.1 423.2 L168.6 424.4 L170.1 423.2 L171.6 424.4 L173.1 423.2 L174.5 424.4 M177 423.8 L178.5 423.2 L180.0 424.4 L181.5 423.2 L183.0 424.4 L184.5 423.2 L186.0 424.4 L187.5 423.2 L189.0 424.4 L190.5 423.2 L192.0 424.4 L193.5 423.2 L195.0 424.4 L196.5 423.2 L198.0 424.4 L199.5 423.2 L201.0 424.4 L202.5 423.2 L204.0 424.4 L205.5 423.2 L205.7 424.4 M218.4 423.8 L219.9 423.2 L221.4 424.4 L222.9 423.2 L224.4 424.4 L225.9 423.2 L227.4 424.4 L228.9 423.2 L230.4 424.4 L231.9 423.2 L233.4 424.4 L234.9 423.2 L236.4 424.4 L237.9 423.2 L239.4 424.4 L240.9 423.2 L242.4 424.4 L243.9 423.2 L245.4 424.4 L246.9 423.2 L248.4 424.4 L249.9 423.2 L251.4 424.4 L252.9 423.2 L254.4 424.4 L255.9 423.2 L257.4 424.4 L257.5 423.2 M260 423.8 L261.5 423.2 L263.0 424.4 L264.5 423.2 L266.0 424.4 L267.5 423.2 L269.0 424.4 L270.5 423.2 L272.0 424.4 L273.5 423.2 L275.0 424.4 L276.5 423.2 L278.0 424.4 L279.5 423.2 L281.0 424.4 L282.5 423.2 L284.0 424.4 L285.5 423.2 L287.0 424.4 L288.5 423.2 M296.7 423.8 L298.2 423.2 L299.7 424.4 L301.2 423.2 L302.7 424.4 L304.2 423.2 L305.7 424.4 L307.2 423.2 L308.7 424.4 L310.2 423.2 L311.7 424.4 L313.2 423.2 L314.7 424.4 L316.2 423.2 L317.7 424.4 L319.2 423.2 L320.0 424.4 M323 423.8 L324.5 423.2 L326.0 424.4 L327.5 423.2 L329.0 424.4 L330.5 423.2 L332.0 424.4 L333.5 423.2 L335.0 424.4 L336.5 423.2 L338.0 424.4 L339.5 423.2 L341.0 424.4 L342.5 423.2 L344.0 424.4 L345.5 423.2 L347.0 424.4 L348.0 423.2 M365 423.8 L366.5 423.2 L368.0 424.4 L369.5 423.2 L371.0 424.4 L372.5 423.2 L374.0 424.4 L375.5 423.2 L377.0 424.4 L378.5 423.2 L380.0 424.4 L381.5 423.2 L383.0 424.4 L384.5 423.2 L386.0 424.4 L387.5 423.2 L389.0 424.4 L390.5 423.2 L392.0 424.4 L393.0 423.2 M396 423.8 L397.5 423.2 L399.0 424.4 L400.5 423.2 L402.0 424.4 L403.5 423.2 L405.0 424.4 L406.5 423.2 L408.0 424.4 L409.5 423.2 L411.0 424.4 L412.5 423.2 L414.0 424.4 L415.5 423.2 L417.0 424.4 L418.5 423.2 L420.0 424.4 L421.5 423.2 L423.0 424.4 L424.5 423.2 L426.0 424.4 L427.5 423.2 L429.0 424.4 L430.5 423.2 L432.0 424.4 L433.0 423.2 M444 423.8 L445.5 423.2 L447.0 424.4 L448.5 423.2 L450.0 424.4 L451.5 423.2 L453.0 424.4 L454.5 423.2 L456.0 424.4 L457.5 423.2 L459.0 424.4 L460.5 423.2 L462.0 424.4 L463.5 423.2 L465.0 424.4 L466.5 423.2 L468.0 424.4 L469.5 423.2 L471.0 424.4 L472.5 423.2 L474.0 424.4 L475.5 423.2 L477.0 424.4 L478.5 423.2 L480.0 424.4 L481.5 423.2 L482.0 424.4 M485 423.8 L486.5 423.2 L488.0 424.4 L489.5 423.2 L491.0 424.4 L492.5 423.2 L494.0 424.4 L495.5 423.2 L497.0 424.4 L498.5 423.2 L500.0 424.4 L501.5 423.2 L503.0 424.4 L504.5 423.2 L506.0 424.4 L507.5 423.2 L509.0 424.4 L510.5 423.2 L512.0 424.4 L513.5 423.2 L515.0 424.4 L516.5 423.2 L518.0 424.4 L519.5 423.2 L520.5 424.4 M526.8 423.8 L528.3 423.2 L529.8 424.4 L531.3 423.2 L532.8 424.4 L534.3 423.2 L535.8 424.4 L537.3 423.2 L538.8 424.4 L540.3 423.2 L541.8 424.4 L543.3 423.2 L544.8 424.4 L546.3 423.2 L547.8 424.4 L549.3 423.2 L550.8 424.4 L552.3 423.2 L553.8 424.4 L555.3 423.2 L556.8 424.4 L558.3 423.2 L559.8 424.4 L561.3 423.2 L562.8 424.4 L564.3 423.2 L565.8 424.4 L567.3 423.2 L568.8 424.4 L570.3 423.2 L571.8 424.4 L573.0 423.2 M576 423.8 L577.5 423.2 L579.0 424.4 L580.5 423.2 L582.0 424.4 L583.5 423.2 L585.0 424.4 L586.5 423.2 L588.0 424.4 L589.5 423.2 L591.0 424.4 L592.5 423.2 L594.0 424.4 L595.5 423.2 L597.0 424.4 L598.5 423.2 L600.0 424.4 L601.5 423.2 L603.0 424.4 L604.5 423.2 L606.0 424.4 L607.5 423.2 L609.0 424.4 L610.5 423.2 L612.0 424.4 M628 423.8 L629.5 423.2 L631.0 424.4 L632.5 423.2 L634.0 424.4 L635.5 423.2 L637.0 424.4 L638.5 423.2 L640.0 424.4 L641.5 423.2 L643.0 424.4 L644.5 423.2 L646.0 424.4 L647.5 423.2 L649.0 424.4 L650.5 423.2 L652.0 424.4 L653.5 423.2 L655.0 424.4 L656.5 423.2 L658.0 424.4 L659.5 423.2 L661.0 424.4 L662.5 423.2 L664.0 424.4 L665.5 423.2 L666.0 424.4"/></g><path d="M520.5 424H526.8" stroke="#6a6ae0" stroke-width="0.9" opacity="0.7"/>
</svg>
<svg class="a" style="left:549px;top:411px" width="7" height="11" viewBox="0 0 7 11"><path d="M1.5 0.8H5.5M3.5 0.8V10.2M1.5 10.2H5.5" fill="none" stroke="#fff" stroke-width="1.6"/><path d="M1.5 0.8H5.5M3.5 0.8V10.2M1.5 10.2H5.5" fill="none" stroke="#333" stroke-width="0.7"/></svg>
<div class="a ser" style="left:148px;top:512px">9) ÖRGÜ OLUŞUMU ANİMASYONLARI</div>
</div>
</div>
<div id="tb" class="a">
<svg class="a" style="left:0;top:0" width="831" height="30" viewBox="0 517 831 30">
<g fill="none" stroke="#e8e8e8" stroke-width="1">
<rect x="25.3" y="523" width="4" height="7.5" rx="2"/><path d="M23 527.5Q23 532.5 27.3 532.5Q31.6 532.5 31.6 527.5M27.3 532.5V535M25 535H29.6"/>
<path d="M43.5 529.5L45 528L46.5 529.5"/>
<rect x="71.5" y="525" width="8.5" height="7.5" rx="1.5"/><path d="M80 527.5L83 525.5V532L80 530"/>
<path d="M95.5 529.5L97 528L98.5 529.5"/>
<circle cx="319" cy="526.8" r="1.8"/><path d="M315.6 533.3Q315.6 529.5 319 529.5Q321 529.5 321.8 530.5"/><circle cx="323" cy="528" r="1.5"/><path d="M320.5 533.8Q320.5 531 323 531Q325.5 531 325.5 533.8Z"/>
<path d="M347.7 529.8L349.2 528.3L350.7 529.8"/>
<path d="M378 524.5H384.5Q386.5 524.5 386.5 526.5V530"/><rect x="373.5" y="526" width="10" height="7" rx="3.5"/><path d="M376 533L375.5 535L378 533"/>
<path d="M395.5 529.8L397 528.3L398.5 529.8"/>
<path d="M425 534Q418.8 529.5 418.8 527Q418.8 524.5 421.5 524.5Q423.5 524.5 425 526.5Q426.5 524.5 428.5 524.5Q431.2 524.5 431.2 527Q431.2 529.5 425 534Z"/>
<path d="M438.3 529.8L439.8 528.3L441.3 529.8"/>
<circle cx="525.8" cy="529.4" r="6.2"/><path d="M525.8 528V532.5"/>
<circle cx="575.8" cy="529.4" r="6.2"/>
</g>
<circle cx="376" cy="529.5" r="0.6" fill="#e8e8e8"/><circle cx="378.5" cy="529.5" r="0.6" fill="#e8e8e8"/><circle cx="381" cy="529.5" r="0.6" fill="#e8e8e8"/>
<circle cx="525.8" cy="526.3" r="0.8" fill="#e8e8e8"/>
<circle cx="573" cy="529.4" r="0.8" fill="#e8e8e8"/><circle cx="575.8" cy="529.4" r="0.8" fill="#e8e8e8"/><circle cx="578.6" cy="529.4" r="0.8" fill="#e8e8e8"/>
<rect x="465.6" y="523.9" width="13.3" height="10.6" rx="1.5" fill="#22d884"/>
<path d="M472.2 532.3V526.8M469.8 529.2L472.2 526.6L474.6 529.2" fill="none" stroke="#000" stroke-width="1.4"/>
<path d="M799.5 523.5H806.5V535L803 537V525.5" fill="none" stroke="#c8264f" stroke-width="1.2"/>
<circle cx="799.5" cy="525" r="1.5" fill="none" stroke="#eee" stroke-width="0.9"/>
<path d="M799 527L797 531L799 533L797.5 536M799 528L801.5 531L800.5 533.5L802 536M797.5 530L795.5 531" fill="none" stroke="#eee" stroke-width="0.9"/>
</svg>
<div class="a" style="left:330px;top:9px;color:#ddd;font-size:6px;line-height:7px">24</div>
<div class="tl" style="left:-12.0px">Ses</div>
<div class="tl" style="left:37.0px">Video</div>
<div class="tl" style="left:280.7px">Katılımcılar</div>
<div class="tl" style="left:339.7px">Sohbet</div>
<div class="tl" style="left:385.0px">Tepki ver</div>
<div class="tl" style="left:432.3px">Paylaş</div>
<div class="tl" style="left:485.7px">Toplantı bilgileri</div>
<div class="tl" style="left:535.0px">Daha fazla</div>
<div class="tl" style="left:762.5px">Ayrıl</div>
</div>
<div class="a" style="left:9.2px;top:488.8px;width:17.6px;height:17.6px;border-radius:50%;background:#2b2d30"></div>
<svg class="a" style="left:13px;top:492.5px" width="10" height="10" viewBox="0 0 10 10"><path d="M2 8L2.3 6L6.8 1.5L8.5 3.2L4 7.7Z M5.8 2.5L7.5 4.2" fill="none" stroke="#27c26b" stroke-width="0.9"/><path d="M1.5 8.6H8" stroke="#27c26b" stroke-width="0.8"/></svg>
<div id="panel" class="a">
<div class="a" style="left:0;top:0;width:190px;height:25.5px;background:#eef1f5"></div>
<div class="a" style="left:0;top:9px;width:163px;text-align:center;font-weight:bold;color:#333;font-size:7px;line-height:9px">Katılımcılar (24)</div>
<svg class="a" style="left:161px;top:10.5px" width="8" height="8" viewBox="0 0 8 8"><path d="M3.5 0.8H1.5Q0.7 0.8 0.7 1.6V6.5Q0.7 7.3 1.5 7.3H6.4Q7.2 7.3 7.2 6.5V4.5" fill="none" stroke="#555" stroke-width="0.8"/><path d="M4.5 0.7H7.3V3.5M7.3 0.7L3.5 4.5" fill="none" stroke="#555" stroke-width="0.8"/></svg>
<svg class="a" style="left:175.5px;top:11px" width="7" height="7" viewBox="0 0 7 7"><path d="M0.5 0.5L6.5 6.5M6.5 0.5L0.5 6.5" stroke="#555" stroke-width="0.8"/></svg>
<div class="a" style="left:12.5px;top:31px;width:167px;height:16.7px;border:1px solid #d4d6da;border-radius:4px"></div>
<svg class="a" style="left:18.5px;top:35px" width="8" height="8" viewBox="0 0 8 8"><circle cx="3.3" cy="3.3" r="2.5" fill="none" stroke="#666" stroke-width="0.8"/><path d="M5.1 5.1L7.3 7.3" stroke="#666" stroke-width="0.8"/></svg>
<div class="a" style="left:27.8px;top:34.5px;color:#888;font-size:6.8px;line-height:9px">Katılımcı bul</div>
<div class="a" style="left:0;top:49px;width:190px;height:440px;overflow:hidden"><div class="a" style="left:0;top:-49px;width:190px;height:520px">
<div class="a" style="left:14px;top:53.00px;width:14px;height:14px;border-radius:3px;overflow:hidden;background:linear-gradient(#cfd8e0 0,#8aa0b4 35%,#3d4f60 60%,#9fb2c0 100%)"></div>
<div class="pn" style="top:55.00px">Ulus Meslek Yüksekokulu (Ben)</div>
<svg class="a" style="left:155.5px;top:55.50px" width="6" height="9" viewBox="0 0 6 9"><rect x="1.8" y="0.5" width="2.4" height="5" rx="1.2" fill="none" stroke="#9a9a9a" stroke-width="0.7"/><path d="M0.7 3.8Q0.7 6.6 3 6.6Q5.3 6.6 5.3 3.8M3 6.6V8.5" fill="none" stroke="#9a9a9a" stroke-width="0.7"/></svg>
<svg class="a" style="left:166.5px;top:56.50px" width="11" height="7" viewBox="0 0 11 7"><rect x="0.5" y="0.8" width="7" height="5.4" rx="1" fill="none" stroke="#9a9a9a" stroke-width="0.8"/><path d="M7.5 2.8L10.3 1.2V5.8L7.5 4.2" fill="none" stroke="#9a9a9a" stroke-width="0.8"/></svg>
<div class="a" style="left:13px;top:78.27px;width:15px;height:7px;border-radius:50%;background:#1c58a8;color:#fff;font-size:3.5px;font-weight:bold;line-height:7px;text-align:center">NIT</div>
<div class="pn" style="top:76.77px">Nit Örme Knitti... &nbsp;&nbsp;&nbsp;(Oturum Sahibi)</div>
<svg class="a" style="left:155.5px;top:77.27px" width="6" height="9" viewBox="0 0 6 9"><rect x="1.8" y="0.5" width="2.4" height="5" rx="1.2" fill="#777" stroke="#777" stroke-width="0.7"/><path d="M0.7 3.8Q0.7 6.6 3 6.6Q5.3 6.6 5.3 3.8M3 6.6V8.5" fill="none" stroke="#777" stroke-width="0.7"/></svg>
<svg class="a" style="left:166.5px;top:78.27px" width="11" height="7" viewBox="0 0 11 7"><rect x="0.5" y="0.8" width="7" height="5.4" rx="1" fill="none" stroke="#9a9a9a" stroke-width="0.8"/><path d="M7.5 2.8L10.3 1.2V5.8L7.5 4.2" fill="none" stroke="#9a9a9a" stroke-width="0.8"/></svg>
<div class="a" style="left:141px;top:79.07px;width:8.7px;height:5.4px;background:#1aa34a;border-radius:1px"></div><svg class="a" style="left:143.3px;top:79.57px" width="4" height="4" viewBox="0 0 4 4"><path d="M2 0.3L3.7 2H2.6V3.7H1.4V2H0.3Z" fill="#fff"/></svg>
<div class="av" style="top:96.54px;background:#1a9aa8">A</div>
<div class="pn" style="top:98.54px">Aleyna Aydoğan</div>
<svg class="a" style="left:155px;top:99.04px" width="8" height="9" viewBox="0 0 8 9"><rect x="2.8" y="0.5" width="2.4" height="5" rx="1.2" fill="none" stroke="#e0605a" stroke-width="0.7"/><path d="M1.7 3.8Q1.7 6.6 4 6.6Q6.3 6.6 6.3 3.8M4 6.6V8.5" fill="none" stroke="#e0605a" stroke-width="0.7"/><path d="M1 8.3L7 0.7" stroke="#e0605a" stroke-width="0.8"/></svg>
<svg class="a" style="left:166.5px;top:100.04px" width="11" height="7" viewBox="0 0 11 7"><rect x="0.5" y="0.8" width="7" height="5.4" rx="1" fill="none" stroke="#9a9a9a" stroke-width="0.8"/><path d="M7.5 2.8L10.3 1.2V5.8L7.5 4.2" fill="none" stroke="#9a9a9a" stroke-width="0.8"/></svg>
<div class="av" style="top:118.31px;background:#000000"></div>
<div class="pn" style="top:120.31px">Berfin Bayrak</div>
<svg class="a" style="left:155px;top:120.81px" width="8" height="9" viewBox="0 0 8 9"><rect x="2.8" y="0.5" width="2.4" height="5" rx="1.2" fill="none" stroke="#e0605a" stroke-width="0.7"/><path d="M1.7 3.8Q1.7 6.6 4 6.6Q6.3 6.6 6.3 3.8M4 6.6V8.5" fill="none" stroke="#e0605a" stroke-width="0.7"/><path d="M1 8.3L7 0.7" stroke="#e0605a" stroke-width="0.8"/></svg>
<svg class="a" style="left:166.5px;top:121.81px" width="11" height="7" viewBox="0 0 11 7"><rect x="0.5" y="0.8" width="7" height="5.4" rx="1" fill="none" stroke="#9a9a9a" stroke-width="0.8"/><path d="M7.5 2.8L10.3 1.2V5.8L7.5 4.2" fill="none" stroke="#9a9a9a" stroke-width="0.8"/></svg>
<div class="av" style="top:140.08px;background:#8d3fc1">BA</div>
<div class="pn" style="top:142.08px">betul aksoy</div>
<svg class="a" style="left:155px;top:142.58px" width="8" height="9" viewBox="0 0 8 9"><rect x="2.8" y="0.5" width="2.4" height="5" rx="1.2" fill="none" stroke="#e0605a" stroke-width="0.7"/><path d="M1.7 3.8Q1.7 6.6 4 6.6Q6.3 6.6 6.3 3.8M4 6.6V8.5" fill="none" stroke="#e0605a" stroke-width="0.7"/><path d="M1 8.3L7 0.7" stroke="#e0605a" stroke-width="0.8"/></svg>
<svg class="a" style="left:166.5px;top:143.58px" width="11" height="7" viewBox="0 0 11 7"><rect x="0.5" y="0.8" width="7" height="5.4" rx="1" fill="none" stroke="#9a9a9a" stroke-width="0.8"/><path d="M7.5 2.8L10.3 1.2V5.8L7.5 4.2" fill="none" stroke="#9a9a9a" stroke-width="0.8"/></svg>
<div class="av" style="top:161.85px;background:#d9571a">C</div>
<div class="pn" style="top:163.85px">ceydatorettoo</div>
<svg class="a" style="left:155px;top:164.35px" width="8" height="9" viewBox="0 0 8 9"><rect x="2.8" y="0.5" width="2.4" height="5" rx="1.2" fill="none" stroke="#e0605a" stroke-width="0.7"/><path d="M1.7 3.8Q1.7 6.6 4 6.6Q6.3 6.6 6.3 3.8M4 6.6V8.5" fill="none" stroke="#e0605a" stroke-width="0.7"/><path d="M1 8.3L7 0.7" stroke="#e0605a" stroke-width="0.8"/></svg>
<svg class="a" style="left:166.5px;top:164.85px" width="11" height="8" viewBox="0 0 11 8"><rect x="0.5" y="1.3" width="7" height="5.4" rx="1" fill="none" stroke="#e0605a" stroke-width="0.8"/><path d="M7.5 3.3L10.3 1.7V6.3L7.5 4.7" fill="none" stroke="#e0605a" stroke-width="0.8"/><path d="M1 7.5L9 0.5" stroke="#e0605a" stroke-width="0.8"/></svg>
<div class="av" style="top:183.62px;background:#c0392b">EA</div>
<div class="pn" style="top:185.62px">Eda Aydın</div>
<svg class="a" style="left:155px;top:186.12px" width="8" height="9" viewBox="0 0 8 9"><rect x="2.8" y="0.5" width="2.4" height="5" rx="1.2" fill="none" stroke="#e0605a" stroke-width="0.7"/><path d="M1.7 3.8Q1.7 6.6 4 6.6Q6.3 6.6 6.3 3.8M4 6.6V8.5" fill="none" stroke="#e0605a" stroke-width="0.7"/><path d="M1 8.3L7 0.7" stroke="#e0605a" stroke-width="0.8"/></svg>
<svg class="a" style="left:166.5px;top:187.12px" width="11" height="7" viewBox="0 0 11 7"><rect x="0.5" y="0.8" width="7" height="5.4" rx="1" fill="none" stroke="#9a9a9a" stroke-width="0.8"/><path d="M7.5 2.8L10.3 1.2V5.8L7.5 4.2" fill="none" stroke="#9a9a9a" stroke-width="0.8"/></svg>
<div class="av" style="top:205.39px;background:#1e9e84">E</div>
<div class="pn" style="top:207.39px">Emre</div>
<svg class="a" style="left:155px;top:207.89px" width="8" height="9" viewBox="0 0 8 9"><rect x="2.8" y="0.5" width="2.4" height="5" rx="1.2" fill="none" stroke="#e0605a" stroke-width="0.7"/><path d="M1.7 3.8Q1.7 6.6 4 6.6Q6.3 6.6 6.3 3.8M4 6.6V8.5" fill="none" stroke="#e0605a" stroke-width="0.7"/><path d="M1 8.3L7 0.7" stroke="#e0605a" stroke-width="0.8"/></svg>
<svg class="a" style="left:166.5px;top:208.89px" width="11" height="7" viewBox="0 0 11 7"><rect x="0.5" y="0.8" width="7" height="5.4" rx="1" fill="none" stroke="#9a9a9a" stroke-width="0.8"/><path d="M7.5 2.8L10.3 1.2V5.8L7.5 4.2" fill="none" stroke="#9a9a9a" stroke-width="0.8"/></svg>
<div class="av" style="top:227.16px;background:#27ae60">Eç</div>
<div class="pn" style="top:229.16px">Emre çoban</div>
<svg class="a" style="left:155px;top:229.66px" width="8" height="9" viewBox="0 0 8 9"><rect x="2.8" y="0.5" width="2.4" height="5" rx="1.2" fill="none" stroke="#e0605a" stroke-width="0.7"/><path d="M1.7 3.8Q1.7 6.6 4 6.6Q6.3 6.6 6.3 3.8M4 6.6V8.5" fill="none" stroke="#e0605a" stroke-width="0.7"/><path d="M1 8.3L7 0.7" stroke="#e0605a" stroke-width="0.8"/></svg>
<svg class="a" style="left:166.5px;top:230.16px" width="11" height="8" viewBox="0 0 11 8"><rect x="0.5" y="1.3" width="7" height="5.4" rx="1" fill="none" stroke="#e0605a" stroke-width="0.8"/><path d="M7.5 3.3L10.3 1.7V6.3L7.5 4.7" fill="none" stroke="#e0605a" stroke-width="0.8"/><path d="M1 7.5L9 0.5" stroke="#e0605a" stroke-width="0.8"/></svg>
<div class="av" style="top:248.93px;background:#27ae60">GD</div>
<div class="pn" style="top:250.93px">Gökçe D</div>
<svg class="a" style="left:155px;top:251.43px" width="8" height="9" viewBox="0 0 8 9"><rect x="2.8" y="0.5" width="2.4" height="5" rx="1.2" fill="none" stroke="#e0605a" stroke-width="0.7"/><path d="M1.7 3.8Q1.7 6.6 4 6.6Q6.3 6.6 6.3 3.8M4 6.6V8.5" fill="none" stroke="#e0605a" stroke-width="0.7"/><path d="M1 8.3L7 0.7" stroke="#e0605a" stroke-width="0.8"/></svg>
<svg class="a" style="left:166.5px;top:252.43px" width="11" height="7" viewBox="0 0 11 7"><rect x="0.5" y="0.8" width="7" height="5.4" rx="1" fill="none" stroke="#9a9a9a" stroke-width="0.8"/><path d="M7.5 2.8L10.3 1.2V5.8L7.5 4.2" fill="none" stroke="#9a9a9a" stroke-width="0.8"/></svg>
<div class="av" style="top:270.70px;background:#f0a020">GŞ</div>
<div class="pn" style="top:272.70px">Gökçen Şimşek</div>
<svg class="a" style="left:155px;top:273.20px" width="8" height="9" viewBox="0 0 8 9"><rect x="2.8" y="0.5" width="2.4" height="5" rx="1.2" fill="none" stroke="#e0605a" stroke-width="0.7"/><path d="M1.7 3.8Q1.7 6.6 4 6.6Q6.3 6.6 6.3 3.8M4 6.6V8.5" fill="none" stroke="#e0605a" stroke-width="0.7"/><path d="M1 8.3L7 0.7" stroke="#e0605a" stroke-width="0.8"/></svg>
<svg class="a" style="left:166.5px;top:274.20px" width="11" height="7" viewBox="0 0 11 7"><rect x="0.5" y="0.8" width="7" height="5.4" rx="1" fill="none" stroke="#9a9a9a" stroke-width="0.8"/><path d="M7.5 2.8L10.3 1.2V5.8L7.5 4.2" fill="none" stroke="#9a9a9a" stroke-width="0.8"/></svg>
<div class="av" style="top:292.47px;background:#27ae60">GB</div>
<div class="pn" style="top:294.47px">Gözde BUHARALI</div>
<svg class="a" style="left:155px;top:294.97px" width="8" height="9" viewBox="0 0 8 9"><rect x="2.8" y="0.5" width="2.4" height="5" rx="1.2" fill="none" stroke="#e0605a" stroke-width="0.7"/><path d="M1.7 3.8Q1.7 6.6 4 6.6Q6.3 6.6 6.3 3.8M4 6.6V8.5" fill="none" stroke="#e0605a" stroke-width="0.7"/><path d="M1 8.3L7 0.7" stroke="#e0605a" stroke-width="0.8"/></svg>
<svg class="a" style="left:166.5px;top:295.97px" width="11" height="7" viewBox="0 0 11 7"><rect x="0.5" y="0.8" width="7" height="5.4" rx="1" fill="none" stroke="#9a9a9a" stroke-width="0.8"/><path d="M7.5 2.8L10.3 1.2V5.8L7.5 4.2" fill="none" stroke="#9a9a9a" stroke-width="0.8"/></svg>
<div class="a" style="left:14px;top:314.24px;width:14px;height:14px;border-radius:3px;overflow:hidden;background:#fff"><div class="a" style="left:2px;top:1px;width:10px;height:13px;border-radius:5px 5px 2px 2px;background:#3a2a2a"></div><div class="a" style="left:4.5px;top:3.5px;width:5px;height:6px;border-radius:50%;background:#e8c0a8"></div><div class="a" style="left:1px;top:10px;width:12px;height:4px;border-radius:4px 4px 0 0;background:#7a2a30"></div></div>
<div class="pn" style="top:316.24px">Halide AKKUŞ</div>
<svg class="a" style="left:155px;top:316.74px" width="8" height="9" viewBox="0 0 8 9"><rect x="2.8" y="0.5" width="2.4" height="5" rx="1.2" fill="none" stroke="#e0605a" stroke-width="0.7"/><path d="M1.7 3.8Q1.7 6.6 4 6.6Q6.3 6.6 6.3 3.8M4 6.6V8.5" fill="none" stroke="#e0605a" stroke-width="0.7"/><path d="M1 8.3L7 0.7" stroke="#e0605a" stroke-width="0.8"/></svg>
<svg class="a" style="left:166.5px;top:317.74px" width="11" height="7" viewBox="0 0 11 7"><rect x="0.5" y="0.8" width="7" height="5.4" rx="1" fill="none" stroke="#9a9a9a" stroke-width="0.8"/><path d="M7.5 2.8L10.3 1.2V5.8L7.5 4.2" fill="none" stroke="#9a9a9a" stroke-width="0.8"/></svg>
<div class="av" style="top:336.01px;background:#e0457b">H</div>
<div class="pn" style="top:338.01px">Hüseyin KIRCI</div>
<svg class="a" style="left:155px;top:338.51px" width="8" height="9" viewBox="0 0 8 9"><rect x="2.8" y="0.5" width="2.4" height="5" rx="1.2" fill="none" stroke="#e0605a" stroke-width="0.7"/><path d="M1.7 3.8Q1.7 6.6 4 6.6Q6.3 6.6 6.3 3.8M4 6.6V8.5" fill="none" stroke="#e0605a" stroke-width="0.7"/><path d="M1 8.3L7 0.7" stroke="#e0605a" stroke-width="0.8"/></svg>
<svg class="a" style="left:166.5px;top:339.01px" width="11" height="8" viewBox="0 0 11 8"><rect x="0.5" y="1.3" width="7" height="5.4" rx="1" fill="none" stroke="#e0605a" stroke-width="0.8"/><path d="M7.5 3.3L10.3 1.7V6.3L7.5 4.7" fill="none" stroke="#e0605a" stroke-width="0.8"/><path d="M1 7.5L9 0.5" stroke="#e0605a" stroke-width="0.8"/></svg>
<div class="av" style="top:357.78px;background:#8e44c1">I</div>
<div class="pn" style="top:359.78px">iPhone</div>
<svg class="a" style="left:155px;top:360.28px" width="8" height="9" viewBox="0 0 8 9"><rect x="2.8" y="0.5" width="2.4" height="5" rx="1.2" fill="none" stroke="#e0605a" stroke-width="0.7"/><path d="M1.7 3.8Q1.7 6.6 4 6.6Q6.3 6.6 6.3 3.8M4 6.6V8.5" fill="none" stroke="#e0605a" stroke-width="0.7"/><path d="M1 8.3L7 0.7" stroke="#e0605a" stroke-width="0.8"/></svg>
<svg class="a" style="left:166.5px;top:360.78px" width="11" height="8" viewBox="0 0 11 8"><rect x="0.5" y="1.3" width="7" height="5.4" rx="1" fill="none" stroke="#e0605a" stroke-width="0.8"/><path d="M7.5 3.3L10.3 1.7V6.3L7.5 4.7" fill="none" stroke="#e0605a" stroke-width="0.8"/><path d="M1 7.5L9 0.5" stroke="#e0605a" stroke-width="0.8"/></svg>
<div class="av" style="top:379.55px;background:#f0a020">IA</div>
<div class="pn" style="top:381.55px">irem altın</div>
<svg class="a" style="left:155px;top:382.05px" width="8" height="9" viewBox="0 0 8 9"><rect x="2.8" y="0.5" width="2.4" height="5" rx="1.2" fill="none" stroke="#e0605a" stroke-width="0.7"/><path d="M1.7 3.8Q1.7 6.6 4 6.6Q6.3 6.6 6.3 3.8M4 6.6V8.5" fill="none" stroke="#e0605a" stroke-width="0.7"/><path d="M1 8.3L7 0.7" stroke="#e0605a" stroke-width="0.8"/></svg>
<svg class="a" style="left:166.5px;top:382.55px" width="11" height="8" viewBox="0 0 11 8"><rect x="0.5" y="1.3" width="7" height="5.4" rx="1" fill="none" stroke="#e0605a" stroke-width="0.8"/><path d="M7.5 3.3L10.3 1.7V6.3L7.5 4.7" fill="none" stroke="#e0605a" stroke-width="0.8"/><path d="M1 7.5L9 0.5" stroke="#e0605a" stroke-width="0.8"/></svg>
<div class="av" style="top:401.32px;background:#f0a020">LA</div>
<div class="pn" style="top:403.32px">Livanur Altun</div>
<svg class="a" style="left:155px;top:403.82px" width="8" height="9" viewBox="0 0 8 9"><rect x="2.8" y="0.5" width="2.4" height="5" rx="1.2" fill="none" stroke="#e0605a" stroke-width="0.7"/><path d="M1.7 3.8Q1.7 6.6 4 6.6Q6.3 6.6 6.3 3.8M4 6.6V8.5" fill="none" stroke="#e0605a" stroke-width="0.7"/><path d="M1 8.3L7 0.7" stroke="#e0605a" stroke-width="0.8"/></svg>
<svg class="a" style="left:166.5px;top:404.32px" width="11" height="8" viewBox="0 0 11 8"><rect x="0.5" y="1.3" width="7" height="5.4" rx="1" fill="none" stroke="#e0605a" stroke-width="0.8"/><path d="M7.5 3.3L10.3 1.7V6.3L7.5 4.7" fill="none" stroke="#e0605a" stroke-width="0.8"/><path d="M1 7.5L9 0.5" stroke="#e0605a" stroke-width="0.8"/></svg>
<div class="av" style="top:423.09px;background:#f0a020">N</div>
<div class="pn" style="top:425.09px">Nazife</div>
<svg class="a" style="left:155px;top:425.59px" width="8" height="9" viewBox="0 0 8 9"><rect x="2.8" y="0.5" width="2.4" height="5" rx="1.2" fill="none" stroke="#e0605a" stroke-width="0.7"/><path d="M1.7 3.8Q1.7 6.6 4 6.6Q6.3 6.6 6.3 3.8M4 6.6V8.5" fill="none" stroke="#e0605a" stroke-width="0.7"/><path d="M1 8.3L7 0.7" stroke="#e0605a" stroke-width="0.8"/></svg>
<svg class="a" style="left:166.5px;top:426.09px" width="11" height="8" viewBox="0 0 11 8"><rect x="0.5" y="1.3" width="7" height="5.4" rx="1" fill="none" stroke="#e0605a" stroke-width="0.8"/><path d="M7.5 3.3L10.3 1.7V6.3L7.5 4.7" fill="none" stroke="#e0605a" stroke-width="0.8"/><path d="M1 7.5L9 0.5" stroke="#e0605a" stroke-width="0.8"/></svg>
<div class="av" style="top:444.86px;background:#1e9e84">NÇ</div>
<div class="pn" style="top:446.86px">Nisa Çalışkan</div>
<svg class="a" style="left:155px;top:447.36px" width="8" height="9" viewBox="0 0 8 9"><rect x="2.8" y="0.5" width="2.4" height="5" rx="1.2" fill="none" stroke="#e0605a" stroke-width="0.7"/><path d="M1.7 3.8Q1.7 6.6 4 6.6Q6.3 6.6 6.3 3.8M4 6.6V8.5" fill="none" stroke="#e0605a" stroke-width="0.7"/><path d="M1 8.3L7 0.7" stroke="#e0605a" stroke-width="0.8"/></svg>
<svg class="a" style="left:166.5px;top:447.86px" width="11" height="8" viewBox="0 0 11 8"><rect x="0.5" y="1.3" width="7" height="5.4" rx="1" fill="none" stroke="#e0605a" stroke-width="0.8"/><path d="M7.5 3.3L10.3 1.7V6.3L7.5 4.7" fill="none" stroke="#e0605a" stroke-width="0.8"/><path d="M1 7.5L9 0.5" stroke="#e0605a" stroke-width="0.8"/></svg>
<div class="av" style="top:466.63px;background:#5a3ea8">R</div>
<div class="pn" style="top:468.63px">Rabia Akkayaoglu</div>
<svg class="a" style="left:155px;top:469.13px" width="8" height="9" viewBox="0 0 8 9"><rect x="2.8" y="0.5" width="2.4" height="5" rx="1.2" fill="none" stroke="#e0605a" stroke-width="0.7"/><path d="M1.7 3.8Q1.7 6.6 4 6.6Q6.3 6.6 6.3 3.8M4 6.6V8.5" fill="none" stroke="#e0605a" stroke-width="0.7"/><path d="M1 8.3L7 0.7" stroke="#e0605a" stroke-width="0.8"/></svg>
<svg class="a" style="left:166.5px;top:470.13px" width="11" height="7" viewBox="0 0 11 7"><rect x="0.5" y="0.8" width="7" height="5.4" rx="1" fill="none" stroke="#9a9a9a" stroke-width="0.8"/><path d="M7.5 2.8L10.3 1.2V5.8L7.5 4.2" fill="none" stroke="#9a9a9a" stroke-width="0.8"/></svg>
</div></div>
<div class="a" style="left:183.3px;top:49px;width:3.6px;height:440px;border-radius:2px;background:#f0f0f4"></div><div class="a" style="left:183.3px;top:49px;width:3.6px;height:393px;border-radius:2px;background:#b0b0b6"></div><div class="a" style="left:18px;top:487.5px;width:7.5px;height:0.8px;background:#ccc"></div>
<div class="pb" style="left:3px;width:45.5px">Davet Edin</div>
<div class="pb" style="left:50px;width:54.7px">Beni sessize al</div>
<div class="pb" style="left:107.5px;width:90px;text-align:left;padding-left:4px">Yeniden oturum sahibi o</div>
</div>
</body></html>
